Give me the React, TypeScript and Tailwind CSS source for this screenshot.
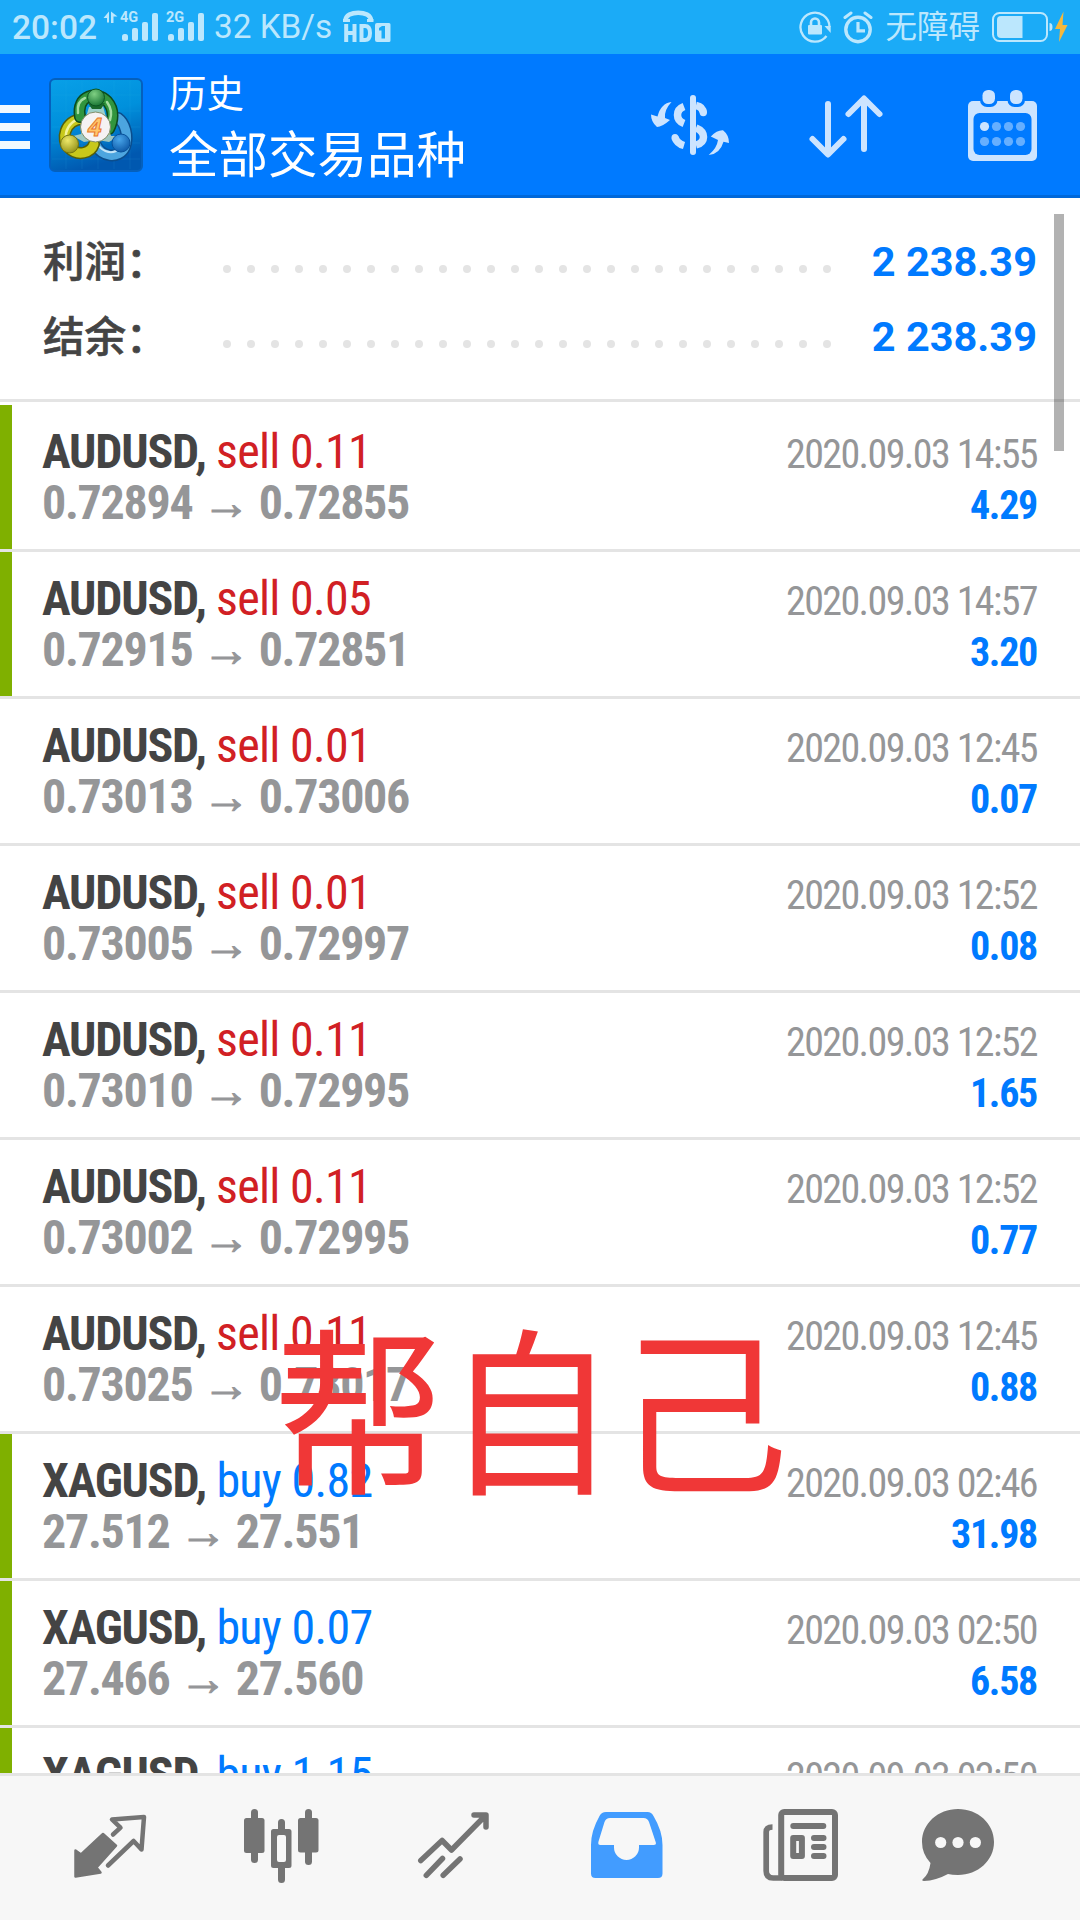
const deals = [
  { symbol: "AUDUSD", side: "sell", lots: "0.11", open: "0.72894", close: "0.72855", time: "2020.09.03 14:55", profit: "4.29", marked: true },
  { symbol: "AUDUSD", side: "sell", lots: "0.05", open: "0.72915", close: "0.72851", time: "2020.09.03 14:57", profit: "3.20", marked: true },
  { symbol: "AUDUSD", side: "sell", lots: "0.01", open: "0.73013", close: "0.73006", time: "2020.09.03 12:45", profit: "0.07", marked: false },
  { symbol: "AUDUSD", side: "sell", lots: "0.01", open: "0.73005", close: "0.72997", time: "2020.09.03 12:52", profit: "0.08", marked: false },
  { symbol: "AUDUSD", side: "sell", lots: "0.11", open: "0.73010", close: "0.72995", time: "2020.09.03 12:52", profit: "1.65", marked: false },
  { symbol: "AUDUSD", side: "sell", lots: "0.11", open: "0.73002", close: "0.72995", time: "2020.09.03 12:52", profit: "0.77", marked: false },
  { symbol: "AUDUSD", side: "sell", lots: "0.11", open: "0.73025", close: "0.73017", time: "2020.09.03 12:45", profit: "0.88", marked: false },
  { symbol: "XAGUSD", side: "buy", lots: "0.82", open: "27.512", close: "27.551", time: "2020.09.03 02:46", profit: "31.98", marked: true },
  { symbol: "XAGUSD", side: "buy", lots: "0.07", open: "27.466", close: "27.560", time: "2020.09.03 02:50", profit: "6.58", marked: true },
  { symbol: "XAGUSD", side: "buy", lots: "1.15", open: "", close: "", time: "2020.09.03 02:50", profit: "", marked: true },
]

const summary = [
  { label: "利润", value: "2 238.39" },
  { label: "结余", value: "2 238.39" },
]

function Signal({ label, data }: { label: string; data?: boolean }) {
  return (
    <div className="relative h-[54px] w-[36px] shrink-0">
      <span className="absolute left-[-2px] top-[10px] text-[14.5px] font-bold leading-[16px]">{label}</span>
      <svg className="absolute inset-0 overflow-visible" width="36" height="54" fill="currentColor">
        {data && <path d="M-13 11.500v11h-2v-4.500h-3.500zM-11 11.500l6.500 5h-4v6.500h-2.500z" />}
        <rect x="0" y="34" width="6" height="7" rx="2.500" />
        <rect x="10" y="28" width="6" height="13" rx="2" />
        <rect x="20" y="22" width="6" height="19" rx="2" />
        <rect x="30" y="13" width="6" height="28" rx="2" />
      </svg>
    </div>
  )
}

function HdIcon() {
  return (
    <svg width="48" height="34" viewBox="0 0 48 34" fill="none" stroke="currentColor">
      <path d="M2.500 10.500C2.500 0 28 0 28 10.500" strokeWidth="4.500" />
      <path d="M0 9h7v3H0zM24 9h6.500v3h-6.500z" fill="currentColor" stroke="none" />
      <path d="M3.200 14v18M11.500 14v18M3 23h9M18.500 16h3.500q5 0 5 7t-5 7h-3.500z" strokeWidth="4" />
      <path d="M34 13h12a1.500 1.500 0 0 1 1.500 1.500v16a1.500 1.500 0 0 1-1.500 1.500H34a2 2 0 0 1-2-2V15a2 2 0 0 1 2-2zM36 18v2.500h2.500v8h3.500V16h-3z" fill="currentColor" fillRule="evenodd" stroke="none" />
    </svg>
  )
}

function LockIcon() {
  return (
    <svg width="34" height="34" viewBox="0 0 34 34" fill="none" stroke="currentColor">
      <path d="M30.500 17A14.500 14.500 0 1 0 27.500 26" strokeWidth="2.300" />
      <path d="M25.500 16h6.200v7z" fill="currentColor" stroke="none" />
      <path d="M12 16v-3.500a4 4 0 0 1 8 0V16" strokeWidth="2.600" />
      <rect x="9" y="15" width="14" height="9.500" rx="1" fill="currentColor" stroke="none" />
    </svg>
  )
}

function AlarmIcon() {
  return (
    <svg width="30" height="34" viewBox="0 0 30 34" fill="none" stroke="currentColor">
      <circle cx="15" cy="19.500" r="12.200" strokeWidth="3.400" />
      <path d="M2 7.500l6-4.500M28 7.500l-6-4.500" strokeWidth="3" strokeLinecap="round" />
      <path d="M15 12v8.800h7" strokeWidth="3.200" />
    </svg>
  )
}

function BatteryIcon() {
  return (
    <svg width="78" height="34" viewBox="0 0 78 34">
      <rect x="1" y="3" width="54" height="28" rx="6.500" fill="none" stroke="currentColor" strokeWidth="2" />
      <path d="M9 6h21.500v22H9a4 4 0 0 1-4-4V10a4 4 0 0 1 4-4z" fill="currentColor" />
      <path d="M57.500 13q3 0 3 4t-3 4z" fill="currentColor" />
      <path d="M71.500 1.500L63 19h5l-1 13 8.500-17h-5z" fill="#f5b83d" />
    </svg>
  )
}

function AppLogo() {
  return (
    <svg width="94" height="94" viewBox="0 0 94 94">
      <defs>
        <linearGradient id="tile" x1="0" y1="0" x2="0.300" y2="1">
          <stop offset="0" stopColor="#08a0e8" />
          <stop offset="0.500" stopColor="#0090dc" />
          <stop offset="1" stopColor="#0058b0" />
        </linearGradient>
        <radialGradient id="green" cx="0.400" cy="0.300" r="0.800">
          <stop offset="0" stopColor="#7fd083" />
          <stop offset="1" stopColor="#0d6b2a" />
        </radialGradient>
        <radialGradient id="yellow" cx="0.400" cy="0.300" r="0.800">
          <stop offset="0" stopColor="#eee86a" />
          <stop offset="1" stopColor="#8b8a10" />
        </radialGradient>
        <radialGradient id="blue" cx="0.400" cy="0.300" r="0.800">
          <stop offset="0" stopColor="#49a6ea" />
          <stop offset="1" stopColor="#0851a0" />
        </radialGradient>
      </defs>
      <rect x="1" y="1" width="92" height="92" rx="5" fill="url(#tile)" stroke="#0560bd" strokeWidth="2" />
      <path d="M17 3v88M33 3v88M49 3v88M65 3v88M81 3v88M3 17h88M3 33h88M3 49h88M3 65h88M3 81h88" stroke="#38b6f0" strokeOpacity="0.120" />
      <g fill="none" strokeLinecap="round">
        <path d="M47 67C52 79 70 82 76 69C80 58 76 45 69 40" stroke="#0b4d8c" strokeWidth="12" />
        <path d="M47 67C52 79 70 82 76 69C80 58 76 45 69 40" stroke="#4ca5df" strokeWidth="9" />
        <path d="M48 64C51 73 61 76 67 73" stroke="#c3e4f8" strokeWidth="2" />
        <path d="M33 41C16 42 11 62 20 70C29 79 42 75 45 66" stroke="#565f09" strokeWidth="12" />
        <path d="M33 41C16 42 11 62 20 70C29 79 42 75 45 66" stroke="#c8c81b" strokeWidth="9" />
        <path d="M29 41C20 45 16 53 17 60" stroke="#f3f29a" strokeWidth="2.500" />
        <path d="M31 39C27 16 49 13 58 23C66 32 64 43 60 51" stroke="#0c4b1e" strokeWidth="12" />
        <path d="M31 39C27 16 49 13 58 23C66 32 64 43 60 51" stroke="#31953d" strokeWidth="9" />
        <path d="M29 35C28 27 31 22 36 20M58 24C63 31 63 36 61 42" stroke="#a4dca0" strokeWidth="2.500" />
      </g>
      <path d="M40 29L54 28L62 58L70 58L60 64L48 62L35 64L24 58L32 56z" fill="#dfe9bd" fillOpacity="0.700" />
      <path d="M39 25h17l-4 6h-9z" fill="#19692b" />
      <circle cx="47" cy="19.500" r="8.500" fill="url(#green)" stroke="#0b5522" />
      <circle cx="20.500" cy="66" r="9" fill="url(#yellow)" stroke="#747510" />
      <circle cx="72" cy="65" r="9" fill="url(#blue)" stroke="#07509a" />
      <circle cx="46.500" cy="49" r="15" fill="#f5f2f3" stroke="#7f8d68" />
      <text x="46" y="57.500" textAnchor="middle" fontSize="25" fontWeight="700" fontStyle="italic" fontFamily="Open Sans, sans-serif" fill="#ffc66a" stroke="#e8752a" strokeWidth="1">4</text>
    </svg>
  )
}

function CurrencyIcon() {
  return (
    <svg width="88" height="80" viewBox="0 0 88 80" fill="none" stroke="#cce4ff" strokeWidth="7.500">
      <path d="M47 13v54" strokeWidth="6" strokeLinecap="round" />
      <path d="M38 21.500Q31.500 24 31.500 30T38 38.500" />
      <path d="M29 52.500Q31 58.500 38 60.500" />
      <path d="M50 20.500Q57 22 57 27.500" />
      <path d="M50 43Q57.500 46 57.500 52T50 60" />
      <g fill="#cce4ff" stroke="none">
        <circle cx="29" cy="52.500" r="3.500" />
        <circle cx="57.300" cy="27.500" r="3.700" />
        <path d="M25.500 17Q18 25 19 33L24 35Q16 42 11 42Q5 37 5 29.500L11.500 31.500Q15 18 25.500 17z" />
        <path d="M62.700 70Q71 63 72 55L64.800 51.500Q71 45 77 45.300Q83 50 83 58L77.500 56.700Q74 69 62.700 70z" />
      </g>
    </svg>
  )
}

function SortIcon() {
  return (
    <svg width="88" height="80" viewBox="0 0 88 80" fill="none" stroke="#cce4ff" strokeWidth="6" strokeLinecap="round" strokeLinejoin="round">
      <path d="M26 19v50M10.500 54L26 69.500L41.500 54" />
      <path d="M62 64V14M46.500 29L62 13.500L77.500 29" />
    </svg>
  )
}

function CalendarIcon() {
  return (
    <svg width="88" height="80" viewBox="0 0 88 80">
      <rect x="10" y="16" width="69" height="60" rx="5" fill="#cce4ff" />
      <rect x="15.500" y="28" width="58" height="42" rx="6" fill="#007aff" />
      <rect x="22" y="2" width="17.500" height="20" rx="7" fill="#007aff" />
      <rect x="49.500" y="2" width="17.500" height="20" rx="7" fill="#007aff" />
      <rect x="24.500" y="5" width="12.500" height="14" rx="5.500" fill="#cce4ff" />
      <rect x="52" y="5" width="12.500" height="14" rx="5.500" fill="#cce4ff" />
      {[26.5, 38.5, 50.5, 62.5].map((x, i) => (
        <g key={x} fill="#66afff">
          <circle cx={x} cy="41.500" r="4.600" fill={i === 0 ? "#cce4ff" : "#66afff"} />
          <circle cx={x} cy="56.500" r="4.600" />
        </g>
      ))}
    </svg>
  )
}

const tabs = [
  {
    id: "quotes",
    icon: (
      <>
        <path d="M13.500 50.500L19 54.500L41 34L54 45.700L34.500 67.500L38.500 72.500L13.500 76.500z" fill="currentColor" strokeWidth="2.500" />
        <path d="M51 34.500L58.500 27.700L50 19.500L82 17L79.500 49.500L71.600 41L46 65.500" strokeWidth="4.500" />
      </>
    ),
  },
  {
    id: "charts",
    icon: (
      <g fill="currentColor" stroke="none">
        <rect x="10" y="18" width="20.500" height="35" rx="2.500" />
        <rect x="17" y="9" width="7" height="54" rx="3.500" />
        <path d="M39.500 29h15.500a2.500 2.500 0 0 1 2.500 2.500v34a2.500 2.500 0 0 1-2.500 2.500h-15.500a2.500 2.500 0 0 1-2.500-2.500v-34a2.500 2.500 0 0 1 2.500-2.500zM45 35a2 2 0 0 0-2 2v23a2 2 0 0 0 2 2h5a2 2 0 0 0 2-2V37a2 2 0 0 0-2-2z" fillRule="evenodd" />
        <path d="M44 30v-7.500a3.500 3.500 0 0 1 7 0V30zM44 67v12.500a3.500 3.500 0 0 0 7 0V67z" />
        <rect x="64" y="18" width="20.500" height="34.500" rx="2.500" />
        <rect x="71" y="9" width="7" height="56" rx="3.500" />
      </g>
    ),
  },
  {
    id: "trade",
    icon: (
      <g strokeWidth="5.500">
        <path d="M14.800 60.500L36.100 40.500L45.500 50L79.500 15.500M68 15h12v12" />
        <path d="M20.300 75.300L36.500 58.500M37.200 75.300L54 59" />
      </g>
    ),
  },
  {
    id: "history",
    active: true,
    icon: (
      <path
        d="M28 12h41.500q4 0 6 4q9 15 9 29v28.500q0 4.500-4.500 4.500H17.500q-4.500 0-4.500-4.500V45q0-14 8.500-29q2-4 6.500-4zM32 18q-4 0-5.500 4L20.500 41.500q-1 3.500 2 3.500H36v2.500a12.500 12.500 0 0 0 25 0V45h14.500q3.500 0 2-3.500L71 22q-1.500-4-5.500-4z"
        fill="currentColor"
        fillRule="evenodd"
        stroke="none"
      />
    ),
  },
  {
    id: "news",
    icon: (
      <>
        <rect x="31.200" y="12" width="53.800" height="66" rx="3" strokeWidth="6" />
        <path d="M22.500 27q-6.300 0-6.300 5v39q0 7 7 7h9" strokeWidth="5.700" strokeLinecap="butt" />
        <path d="M43.300 26h30M64 38h9.500M64 47h9.500M64 56h9.500" strokeWidth="6" />
        <rect x="43.200" y="38" width="8.700" height="18" strokeWidth="6" />
      </>
    ),
  },
  {
    id: "chat",
    icon: (
      <g stroke="none">
        <path d="M36 9C56 9 72 23.500 72 42S56 75 36 75Q30 75 26 74Q14 80.500 2 81Q-1 80.500 1 79Q7 74 8.500 63Q0 54 0 42C0 23.500 16 9 36 9z" fill="currentColor" />
        <g fill="#f7f7f7">
          <circle cx="18.700" cy="42.500" r="5.600" />
          <circle cx="36" cy="42.500" r="5.600" />
          <circle cx="53.400" cy="42.500" r="5.600" />
        </g>
      </g>
    ),
  },
]

export default function App() {
  return (
    <div className="relative flex h-[1920px] w-[1080px] flex-col overflow-hidden bg-white font-[Roboto,'Noto_Sans_CJK_SC',sans-serif]">
      <div className="flex h-[54px] shrink-0 items-center justify-between bg-[#1babf7] pl-3 pr-2.5 text-[#bbe7fd]">
        <div className="flex items-center">
          <span className="w-[110px] pt-0.5 text-[33.5px] font-medium leading-[54px]">20:02</span>
          <Signal label="4G" data />
          <div className="w-[10px]" />
          <Signal label="2G" />
          <span className="ml-2.5 w-[129px] whitespace-nowrap text-[33.3px] leading-[54px]">32 KB/s</span>
          <HdIcon />
        </div>
        <div className="flex items-center">
          <LockIcon />
          <div className="ml-2.5">
            <AlarmIcon />
          </div>
          <span className="ml-3 mr-3 pt-0.5 text-[31.5px] leading-[54px]">无障碍</span>
          <BatteryIcon />
        </div>
      </div>

      <div className="flex h-[144px] shrink-0 items-center border-b-3 border-[#0068d9] bg-[#007aff] pr-[34px] text-white">
        <div className="mt-1 flex w-[30px] flex-col gap-2.5">
          <div className="h-2 bg-[#f2f9ff]" />
          <div className="h-2 bg-[#f2f9ff]" />
          <div className="h-2 bg-[#f2f9ff]" />
        </div>
        <div className="ml-[19px] mt-px">
          <AppLogo />
        </div>
        <div className="ml-[26px] flex-1 pt-[5px]">
          <div className="text-[37.5px] leading-[56px]">历史</div>
          <div className="pt-px text-[49.500px] leading-[66px]">全部交易品种</div>
        </div>
        <div className="flex gap-[68px]">
          <CurrencyIcon />
          <SortIcon />
          <CalendarIcon />
        </div>
      </div>

      <div className="relative flex-1 overflow-hidden">
        <div className="mb-[3px] flex h-[204px] flex-col border-b-3 border-[#e4e4e4] pl-[43px] pr-[43px] pt-[26px]">
          {summary.map(item => (
            <div key={item.label} className="flex h-[75px] items-center">
              <span className="w-[180px] pt-1 text-[41.5px] font-medium text-[#444] [-webkit-text-stroke:0.6px_#444]">{item.label}：</span>
              <div className="mt-[15px] flex w-[608px] justify-between">
                {Array.from({ length: 26 }, (_, i) => (
                  <span key={i} className="size-2 rounded-full bg-[#e4e4e4]" />
                ))}
              </div>
              <span className="flex-1 pt-0.5 text-right text-[41.5px] font-bold text-[#007aff]">{item.value}</span>
            </div>
          ))}
        </div>

        {deals.map((deal, i) => (
          <div key={i} className="relative h-[147px] border-b-3 border-[#e4e4e4] pl-[42px] pr-[43px] pt-[21px] font-['Roboto_Condensed',Roboto,sans-serif] [font-stretch:75%]">
            {deal.marked && <div className="absolute left-0 top-0 h-[144px] w-3 bg-[#7fb000]" />}
            <div className="flex h-[51px] items-baseline justify-between whitespace-nowrap leading-[51px]">
              <div className="text-[48px] tracking-[-0.7px]">
                <span className="font-bold tracking-[-1.2px] text-[#444]">{deal.symbol},</span>{" "}
                <span className={deal.side === "sell" ? "text-[#d12024]" : "text-[#007aff]"}>
                  {deal.side} {deal.lots}
                </span>
              </div>
              <span className="text-[40px] tracking-[-1.6px] text-[#959698]">{deal.time}</span>
            </div>
            {deal.open && (
              <div className="flex h-[51px] items-baseline justify-between whitespace-nowrap font-bold leading-[51px]">
                <div className="text-[48px] tracking-[-1.3px] text-[#959698]">
                  {deal.open} <span className="[-webkit-text-stroke:1px_#959698]">→</span> {deal.close}
                </div>
                <span className="text-[40px] tracking-[-1.3px] text-[#007aff]">{deal.profit}</span>
              </div>
            )}
          </div>
        ))}

        <div className="absolute left-[1054px] top-4 h-[237px] w-[10px] bg-black/30" />
        <div className="absolute left-[273px] top-[1102px] origin-left scale-x-[0.96] whitespace-nowrap text-[179px] leading-[240px] text-[#f03737]">帮自己</div>
      </div>

      <div className="flex h-[147px] shrink-0 border-t-3 border-[#e4e4e4] bg-[#f7f7f7] px-6">
        {tabs.map(tab => (
          <div key={tab.id} className="flex w-[172px] items-center justify-center">
            <svg
              className={tab.active ? "overflow-visible text-[#429cff]" : "overflow-visible text-[#747474]"}
              width="96"
              height="96"
              viewBox="0 0 96 96"
              fill="none"
              stroke="currentColor"
              strokeLinecap="round"
              strokeLinejoin="round"
            >
              {tab.icon}
            </svg>
          </div>
        ))}
      </div>
    </div>
  )
}
